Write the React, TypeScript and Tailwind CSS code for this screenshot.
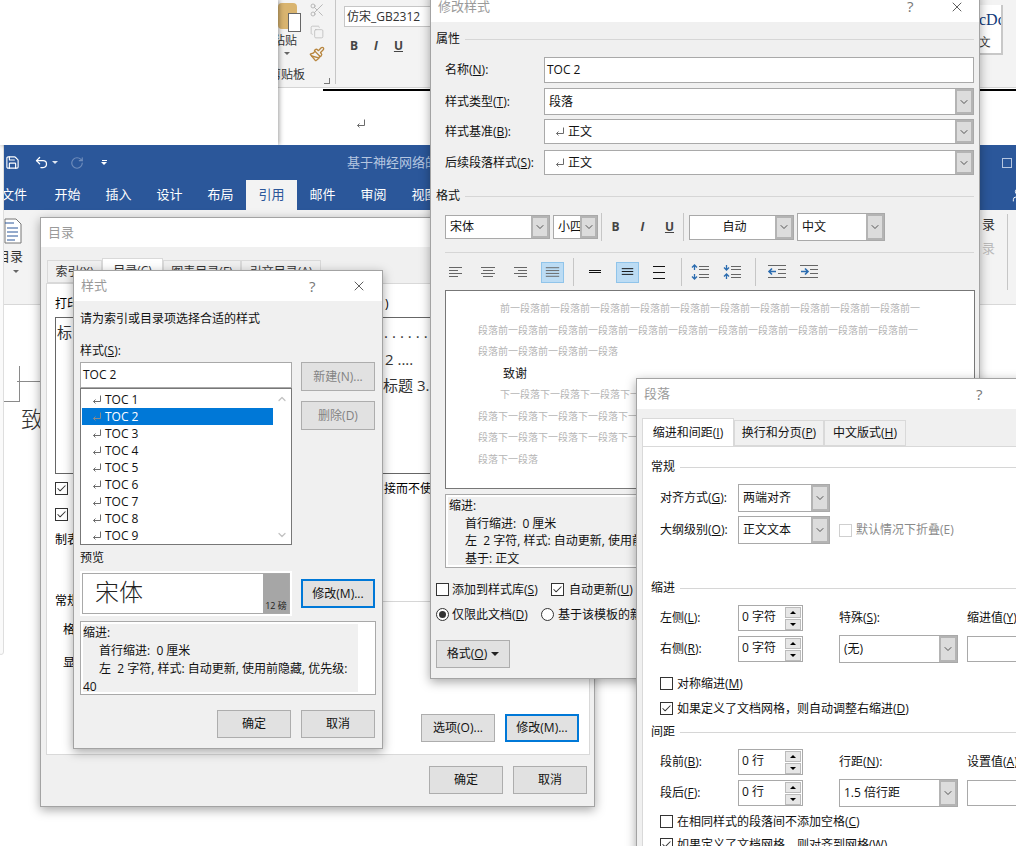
import React, { type FC, type ReactNode } from 'react';
import { ChevronDown, ChevronUp, Check, X, Scissors, Copy, Paintbrush, Save, Undo2, RotateCw, User } from 'lucide-react';

const TOC_ITEMS = ['TOC 1', 'TOC 2', 'TOC 3', 'TOC 4', 'TOC 5', 'TOC 6', 'TOC 7', 'TOC 8', 'TOC 9'];
const WORD_TABS = ['开始', '插入', '设计', '布局', '引用', '邮件', '审阅', '视图'];

const BEFORE = '前一段落';
const AFTER = '下一段落';

// Return mark shown in front of the style names
const ReturnMark = ({ className = 'text-[#6b6b6b]' }: { className?: string }) => (
  <svg width="9" height="10" viewBox="0 0 9 10" className={`shrink-0 ${className}`} fill="none" stroke="currentColor">
    <path d="M8.5 0.5V6.5H1.5M3.5 4.5L1.5 6.5L3.5 8.5" />
  </svg>
);

const Btn = ({ children, primary, disabled, className = '' }: { children: ReactNode; primary?: boolean; disabled?: boolean; className?: string }) => (
  <div
    className={`w-[74px] h-[28px] shrink-0 flex items-center justify-center bg-[#e1e1e1] ${
      primary ? 'border-2 border-[#0078d7]' : 'border border-[#adadad]'
    } ${disabled ? 'text-[#838383] bg-[#dedede]' : 'text-[#111]'} ${className}`}
  >
    {children}
  </div>
);

const Combo = ({ children, className = '', arrow = 'w-[18px]' }: { children: ReactNode; className?: string; arrow?: string }) => (
  <div className={`flex shrink-0 bg-white border border-[#a9a9a9] ${className}`}>
    <div className="flex-1 min-w-0 flex items-center overflow-hidden whitespace-nowrap pl-[4px]">{children}</div>
    <div className={`${arrow} shrink-0 flex items-center justify-center bg-[#dcdcdc] border-2 border-[#b4b4b4]`}>
      <ChevronDown size={12} strokeWidth={1.8} className="text-[#444]" />
    </div>
  </div>
);

const CheckBox = ({ checked, disabled }: { checked?: boolean; disabled?: boolean }) => (
  <div className={`w-[13px] h-[13px] shrink-0 flex items-center justify-center bg-white border ${disabled ? 'border-[#cfcfcf]' : 'border-[#333]'}`}>
    {checked && <Check size={11} strokeWidth={2.2} className="text-[#333]" />}
  </div>
);

const Radio = ({ on }: { on?: boolean }) => (
  <div className="w-[13px] h-[13px] shrink-0 rounded-full bg-white border border-[#333] flex items-center justify-center">
    {on && <div className="w-[7px] h-[7px] rounded-full bg-[#333]" />}
  </div>
);

const SectionTitle = ({ title }: { title: string }) => (
  <div className="flex items-center gap-[5px] h-[16px]">
    <span className="shrink-0">{title}</span>
    <div className="flex-1 h-px bg-[#d6d6d6]" />
  </div>
);

const Spin = ({ value }: { value: string }) => (
  <div className="w-[65px] h-[26px] shrink-0 flex items-center bg-white border border-[#a9a9a9]">
    <span className="flex-1 pl-[3px] -mt-[2px]">{value}</span>
    <div className="w-[16px] flex flex-col gap-px mr-[1px]">
      <div className="h-[11px] bg-[#e6e6e6] border border-[#bbb] flex items-center justify-center">
        <div className="w-0 h-0 border-x-[3px] border-x-transparent border-b-[3px] border-b-black" />
      </div>
      <div className="h-[11px] bg-[#e6e6e6] border border-[#bbb] flex items-center justify-center">
        <div className="w-0 h-0 border-x-[3px] border-x-transparent border-t-[3px] border-t-black" />
      </div>
    </div>
  </div>
);

const Lines = ({ kind }: { kind: 'left' | 'center' | 'right' | 'justify' | 'single' | 'half' | 'double' }) => {
  const rows: Record<string, string> = {
    left: 'M4 6.5h13M4 9.5h9M4 12.5h13M4 15.5h9',
    center: 'M4 6.5h14M6 9.5h10M4 12.5h14M6 15.5h10',
    right: 'M5 6.5h13M9 9.5h9M5 12.5h13M9 15.5h9',
    justify: 'M4 6.5h14M4 9.5h14M4 12.5h14M4 15.5h14',
    single: 'M5 9.5h12M5 11.5h12',
    half: 'M5 7.5h12M5 10.5h12M5 13.5h12',
    double: 'M5 5.5h12M5 11.5h12M5 17.5h12',
  };
  return (
    <svg width="22" height="22" viewBox="0 0 22 22" fill="none" stroke={kind === 'single' || kind === 'half' || kind === 'double' ? '#111' : '#666'} strokeWidth="1">
      <path d={rows[kind]} />
    </svg>
  );
};

const SpacingIcon = ({ open }: { open: boolean }) => (
  <svg width="22" height="22" viewBox="0 0 22 22" fill="none">
    <path d="M9 5.5h10M9 8.5h10M9 13.5h10M9 16.5h10" stroke="#666" />
    <path d={open ? 'M4.5 9V4M2 6.5l2.5-2.5 2.5 2.5M4.5 13v5M2 15.5l2.5 2.5 2.5-2.5' : 'M4.5 4v5M2 6.5l2.5 2.5 2.5-2.5M4.5 18v-5M2 15.5l2.5-2.5 2.5 2.5'} stroke="#2b6cb0" strokeWidth="1.3" />
  </svg>
);

const IndentIcon = ({ inward }: { inward: boolean }) => (
  <svg width="22" height="22" viewBox="0 0 22 22" fill="none">
    <path d="M2 4.5h18M12 8.5h8M12 12.5h8M2 16.5h18" stroke="#666" />
    <path d={inward ? 'M3 10.5h7M7 7.5l3 3-3 3' : 'M10 10.5H3M6 7.5l-3 3 3 3'} stroke="#2b6cb0" strokeWidth="1.6" />
  </svg>
);

const Sep = ({ h = 'h-[28px]' }: { h?: string }) => <div className={`w-px ${h} bg-[#c6c6c6] shrink-0`} />;

const Active = ({ children }: { children: ReactNode }) => (
  <div className="w-[23px] h-[21px] flex items-center justify-center bg-[#bcdcf4] border border-[#90c4ea]">{children}</div>
);

// Window with a white caption bar and the gray dialog body
const Dialog = ({
  title,
  className,
  closeAt,
  children,
  captionH,
}: {
  title: string;
  className: string;
  closeAt?: string;
  captionH: string;
  children: ReactNode;
}) => (
  <div className={`absolute flex flex-col bg-[#f0f0f0] border border-[#a3a3a3] shadow-[0_3px_10px_rgba(0,0,0,0.35)] ${className}`}>
    <div className={`${captionH} shrink-0 bg-white flex items-center pl-[7px] text-[13px] text-[#9a9a9a] whitespace-nowrap`}>
      <span>{title}</span>
      {closeAt && (
        <div className={`flex items-center ml-auto ${closeAt}`}>
          <span className="text-[15px] text-[#777] w-[42px]">?</span>
          <X size={16} strokeWidth={1.3} className="text-[#444]" />
        </div>
      )}
    </div>
    {children}
  </div>
);

const WordWindowBack: FC = () => (
  <div className="absolute left-[278px] top-0 w-[738px] h-[145px] bg-white">
    <div className="h-[88px] bg-[#f3f3f3] border-b border-[#d4d4d4] flex">
      <div className="w-[47px] relative shrink-0 overflow-hidden">
        <div className="w-[19px] h-[26px] bg-[#d9b46f] rounded-sm mt-[3px]" />
        <div className="absolute left-[10px] top-[13px] w-[13px] h-[19px] bg-white border border-[#666]" />
        <div className="text-[12px] leading-none mt-[6px] -ml-[5px] text-[#333] whitespace-nowrap">粘贴</div>
        <div className="w-0 h-0 mt-[5px] ml-[6px] border-x-[3px] border-x-transparent border-t-[3px] border-t-[#666]" />
        <div className="text-[12px] leading-none mt-[14px] -ml-[9px] text-[#333] whitespace-nowrap">剪贴板</div>
      </div>
      <div className="w-[32px] -ml-[24px] pt-[2px] flex flex-col gap-[7px] items-center text-[#b4b4b4] shrink-0">
        <Scissors size={16} strokeWidth={1.4} />
        <Copy size={14} strokeWidth={1.2} />
        <Paintbrush size={16} strokeWidth={2} className="text-[#b8863f]" />
        <div className="w-[6px] h-[6px] mt-[9px] ml-[20px] border-r border-b border-[#777]" />
      </div>
      <div className="ml-[2px]"><Sep h="h-[84px]" /></div>
      <div className="pl-[8px] pt-[6px]">
        <div className="w-[90px] h-[21px] bg-white border border-[#c6c6c6] text-[12px] text-[#333] flex items-center pl-[2px] whitespace-nowrap">
          仿宋_GB2312
        </div>
        <div className="flex gap-[16px] mt-[10px] ml-[6px] text-[#444] font-bold text-[12px]">
          <span>B</span>
          <span className="italic">I</span>
          <span className="underline">U</span>
        </div>
      </div>
      <div className="ml-auto w-[37px] shrink-0 pt-[5px]">
        <div className="w-[24px] h-[50px] bg-white border-r-2 border-b-2 border-[#c8c8c8] text-[16px] leading-[20px] pt-[5px] overflow-hidden font-['Liberation_Serif',serif] text-[#123a7a]">
          <div className="whitespace-nowrap">cDc</div>
          <div className="text-[#333] text-[12px] mt-[2px]">文</div>
        </div>
      </div>
    </div>
    <div className="h-[2px] bg-black ml-[45px] mt-px" />
    <div className="ml-[78px] mt-[28px]">
      <ReturnMark />
    </div>
  </div>
);

const WordWindowFront: FC = () => (
  <div className="absolute left-[4px] top-[145px] w-[1012px] h-[701px] bg-white">
    <div className="h-[35px] bg-[#2b579a] flex items-center text-white">
      <Save size={15} strokeWidth={1.8} className="ml-[1px]" />
      <Undo2 size={15} strokeWidth={2} className="ml-[14px]" />
      <div className="w-0 h-0 ml-[3px] border-x-[3px] border-x-transparent border-t-[3px] border-t-[#dfe6f1]" />
      <RotateCw size={14} strokeWidth={2} className="ml-[12px] text-[#6f8dbc]" />
      <div className="ml-[17px] flex flex-col items-center gap-px">
        <div className="w-[5px] h-px bg-white" />
        <div className="w-0 h-0 border-x-[3px] border-x-transparent border-t-[3px] border-t-white" />
      </div>
      <span className="ml-[240px] text-[13px] text-[#b5c6e0] whitespace-nowrap">基于神经网络的</span>
      <div className="ml-auto mr-[4px] w-[10px] h-[10px] border border-[#b5c6e0]" />
    </div>
    <div className="h-[30px] bg-[#2b579a] flex items-stretch text-[13px] text-white overflow-hidden">
      <div className="w-[40px] -ml-[15px] text-right flex items-center justify-end pr-[2px] shrink-0 overflow-hidden">文件</div>
      <div className="w-[13px] shrink-0" />
      {WORD_TABS.map((tab) => (
        <div
          key={tab}
          className={`w-[51px] shrink-0 flex items-center justify-center ${tab === '引用' ? 'bg-[#f3f3f3] text-[#2b579a]' : ''}`}
        >
          {tab}
        </div>
      ))}
      <User size={16} strokeWidth={1.4} className="ml-auto -mr-[10px] self-center" />
    </div>
    <div className="h-[95px] bg-[#f3f3f3] border-b border-[#d8d8d8] flex">
      <div className="w-[30px] pt-[8px] text-[13px] text-[#333] shrink-0 overflow-hidden">
        <svg width="18" height="26" viewBox="0 0 18 26" fill="none">
          <path d="M1 1h11l5 5v19H1z" fill="#fff" stroke="#777" />
          <path d="M1 5h9M3 10h11M3 14h11M3 18h11M3 22h8" stroke="#2b579a" />
        </svg>
        <div className="mt-[3px] -ml-[7px] whitespace-nowrap leading-[18px]">目录</div>
        <div className="w-0 h-0 mt-[5px] ml-[9px] border-x-[3px] border-x-transparent border-t-[3px] border-t-[#666]" />
      </div>
      <div className="ml-auto w-[28px] pl-[2px] pt-[1px] text-[13px] text-[#333] flex flex-col gap-[4px] mr-[8px] border-r border-[#c6c6c6] h-[76px] mt-[4px] shrink-0">
        <span>录</span>
        <span className="text-[#bbb]">录</span>
      </div>
    </div>
  </div>
);

// Ruler corner marks and the page text peeking out to the left of the dialog
const PageMarks: FC = () => (
  <>
    <div className="absolute left-[19px] top-[366px] w-px h-[36px] bg-[#8a8a8a]" />
    <div className="absolute left-[17px] top-[381px] w-[23px] h-px bg-[#8a8a8a]" />
    <div className="absolute left-[4px] top-[401px] w-[15px] h-px bg-[#8a8a8a]" />
    <div className="absolute left-[21px] top-[403px] text-[23px] leading-[30px] text-[#333] font-['Noto_Sans_CJK_SC',serif] font-light">致</div>
  </>
);

const TocDialog: FC = () => (
  <Dialog title="目录" className="left-[40px] top-[217px] w-[555px] h-[590px]" captionH="h-[29px]">
    <div className="mt-[11px] ml-[6px] h-[25px] flex items-end text-[12px] text-[#333]">
      <div className="w-[55px] h-[23px] bg-[#f0f0f0] border border-[#d9d9d9] flex items-center justify-center">索引(X)</div>
      <div className="w-[61px] h-[25px] bg-white border border-b-0 border-[#d9d9d9] flex items-center justify-center">目录(C)</div>
      <div className="w-[78px] h-[23px] bg-[#f0f0f0] border border-[#d9d9d9] flex items-center justify-center">图表目录(F)</div>
      <div className="w-[80px] h-[23px] bg-[#f0f0f0] border border-[#d9d9d9] flex items-center justify-center">引文目录(A)</div>
    </div>
    <div className="ml-[5px] w-[544px] h-[472px] bg-white border border-[#d9d9d9] text-[12px] pl-[8px] pr-[10px] overflow-hidden">
      <div className="mt-[13px] h-[14px] flex items-center leading-none">
        <span className="w-[330px] shrink-0">打印预览(V)</span>
        <span>)</span>
      </div>
      <div className="mt-[6px] h-[157px] w-[420px] border border-[#666] pt-[1px] text-[#333] text-[15px] leading-[27px] overflow-hidden whitespace-nowrap">
        <div className="flex">
          <span className="w-[328px] shrink-0 pl-[1px]">标</span>
          <span className="tracking-[4px]">.......</span>
        </div>
        <div className="pl-[329px]">2 ....</div>
        <div className="pl-[327px] -mt-px">标题 3.</div>
      </div>
      <div className="mt-[8px] h-[13px] flex items-center whitespace-nowrap">
        <CheckBox checked />
        <span className="ml-[316px]">接而不使用</span>
      </div>
      <div className="mt-[13px]">
        <CheckBox checked />
      </div>
      <div className="mt-[13px] h-[14px] leading-none">制表</div>
      <div className="mt-[45px]">
        <SectionTitle title="常规" />
      </div>
      <div className="mt-[15px] h-[14px] leading-none ml-[8px]">格</div>
      <div className="mt-[19px] h-[14px] leading-none ml-[8px]">显</div>
      <div className="mt-[43px] flex justify-end gap-[10px]">
        <Btn>选项(O)...</Btn>
        <Btn primary>修改(M)...</Btn>
      </div>
    </div>
    <div className="mt-[11px] mr-[7px] flex justify-end gap-[10px] text-[12px]">
      <Btn>确定</Btn>
      <Btn>取消</Btn>
    </div>
  </Dialog>
);

const StyleDialog: FC = () => (
  <Dialog
    title="样式"
    className="left-[73px] top-[270px] w-[310px] h-[479px]"
    captionH="h-[30px]"
    closeAt="mr-[15px]"
  >
    <div className="pl-[6px] text-[12px] text-[#111]">
      <div className="mt-[10px] h-[16px] leading-[16px]">请为索引或目录项选择合适的样式</div>
      <div className="mt-[16px] h-[16px] leading-[16px]">
        样式(<span className="underline">S</span>):
      </div>
      <div className="mt-[3px] flex gap-[9px]">
        <div className="w-[212px] flex flex-col">
          <div className="h-[26px] bg-white border border-[#a9a9a9] flex items-center pl-[2px]">TOC 2</div>
          <div className="h-[157px] bg-white border border-[#777] flex pl-[1px] pt-[1px]">
            <div className="w-[191px] pt-[1px]">
              {TOC_ITEMS.map((item) => (
                <div
                  key={item}
                  className={`h-[17px] flex items-center pl-[10px] gap-[4px] ${item === 'TOC 2' ? 'bg-[#0078d7] text-white' : ''}`}
                >
                  <ReturnMark className={item === 'TOC 2' ? 'text-[#8a8a8a]' : 'text-[#6b6b6b]'} />
                  {item}
                </div>
              ))}
            </div>
            <div className="w-[17px] flex flex-col items-center justify-between py-[3px] text-[#c2c2c2]">
              <ChevronUp size={12} strokeWidth={2.5} />
              <ChevronDown size={12} strokeWidth={2.5} />
            </div>
          </div>
        </div>
        <div className="flex flex-col gap-[10px]">
          <Btn disabled className="h-[29px]">新建(N)...</Btn>
          <Btn disabled className="h-[29px]">删除(D)</Btn>
        </div>
      </div>
      <div className="mt-[5px] h-[16px] leading-[16px]">预览</div>
      <div className="mt-[5px] flex items-center gap-[9px]">
        <div className="w-[212px] h-[45px] bg-white p-[2px]">
          <div className="h-full border border-[#a9a9a9] flex">
            <div className="flex-1 pl-[12px] text-[24px] leading-[36px] font-light text-[#222]">宋体</div>
            <div className="w-[26px] bg-[#a6a6a6] text-[9px] flex items-end justify-center whitespace-nowrap leading-[14px] text-[#222]">12 磅</div>
          </div>
        </div>
        <Btn primary className="h-[29px]">修改(M)...</Btn>
      </div>
      <div className="mt-[5px] w-[296px] h-[74px] bg-white border border-[#a9a9a9] p-[2px] pr-[17px] leading-[18px]">
        <div className="h-full bg-[#f0f0f0] whitespace-nowrap">
          <div className="h-[18px]">缩进:</div>
          <div className="pl-[16px]">首行缩进:&nbsp;&nbsp;0 厘米</div>
          <div className="pl-[16px]">左&nbsp;&nbsp;2 字符, 样式: 自动更新, 使用前隐藏, 优先级:</div>
          <div>40</div>
        </div>
      </div>
      <div className="mt-[15px] flex gap-[10px] ml-[137px]">
        <Btn>确定</Btn>
        <Btn>取消</Btn>
      </div>
    </div>
  </Dialog>
);

const ModifyDialog: FC = () => {
  const preview = (word: string, n: number) => word.repeat(n);
  return (
    <Dialog
      title="修改样式"
      className="left-[430px] top-[-10px] w-[550px] h-[689px]"
      captionH="h-[31px]"
      closeAt="mr-[14px]"
    >
      <div className="pl-[5px] pr-[5px] text-[12px] text-[#111]">
        <div className="mt-[9px]">
          <SectionTitle title="属性" />
        </div>
        <div className="ml-[9px]">
          <div className="mt-[10px] flex items-center">
            <span className="w-[99px] shrink-0">名称(<span className="underline">N</span>):</span>
            <div className="w-[430px] h-[26px] bg-white border border-[#a9a9a9] flex items-center pl-[2px]">TOC 2</div>
          </div>
          <div className="mt-[5px] flex items-center">
            <span className="w-[99px] shrink-0">样式类型(<span className="underline">T</span>):</span>
            <Combo className="w-[430px] h-[27px]">段落</Combo>
          </div>
          <div className="mt-[4px] flex items-center">
            <span className="w-[99px] shrink-0">样式基准(<span className="underline">B</span>):</span>
            <Combo className="w-[430px] h-[25px]">
              <span className="ml-[6px] mr-[4px]"><ReturnMark /></span>正文
            </Combo>
          </div>
          <div className="mt-[6px] flex items-center">
            <span className="w-[99px] shrink-0 whitespace-nowrap">后续段落样式(<span className="underline">S</span>):</span>
            <Combo className="w-[430px] h-[25px]">
              <span className="ml-[6px] mr-[4px]"><ReturnMark /></span>正文
            </Combo>
          </div>
        </div>
        <div className="mt-[13px]">
          <SectionTitle title="格式" />
        </div>
        <div className="ml-[9px] mt-[9px] h-[28px] flex items-center">
          <Combo className="w-[105px] h-[24px]">宋体</Combo>
          <Combo className="w-[45px] h-[24px] ml-[3px]" arrow="w-[17px]">小四</Combo>
          <div className="ml-[3px]"><Sep /></div>
          <span className="w-[27px] text-center font-bold text-[#444]">B</span>
          <span className="w-[27px] text-center italic font-bold text-[#444]">I</span>
          <span className="w-[27px] text-center underline font-bold text-[#444]">U</span>
          <Sep />
          <Combo className="w-[105px] h-[25px] ml-[5px]"><span className="w-full text-center">自动</span></Combo>
          <Combo className="w-[88px] h-[28px] ml-[3px]">中文</Combo>
        </div>
        <div className="ml-[9px] mt-[11px] h-px bg-[#d6d6d6]" />
        <div className="ml-[9px] mt-[5px] h-[28px] flex items-center">
          <Lines kind="left" />
          <div className="ml-[10px]"><Lines kind="center" /></div>
          <div className="ml-[10px]"><Lines kind="right" /></div>
          <div className="ml-[10px]"><Active><Lines kind="justify" /></Active></div>
          <div className="ml-[9px]"><Sep /></div>
          <div className="ml-[10px]"><Lines kind="single" /></div>
          <div className="ml-[10px]"><Active><Lines kind="half" /></Active></div>
          <div className="ml-[9px]"><Lines kind="double" /></div>
          <div className="ml-[11px]"><Sep /></div>
          <div className="ml-[8px]"><SpacingIcon open /></div>
          <div className="ml-[10px]"><SpacingIcon open={false} /></div>
          <div className="ml-[11px]"><Sep /></div>
          <div className="ml-[10px]"><IndentIcon inward={false} /></div>
          <div className="ml-[10px]"><IndentIcon inward /></div>
        </div>
        <div className="ml-[9px] mt-[4px] w-[530px] h-[199px] bg-white border border-[#777] pt-[7px] text-[10px] leading-[21.5px] text-[#b5b5b5] overflow-hidden whitespace-nowrap">
          <div className="pl-[54px]">{preview(BEFORE, 10)}前一</div>
          <div className="pl-[32px]">段落{preview(BEFORE, 10)}前一</div>
          <div className="pl-[32px]">段落{preview(BEFORE, 3)}</div>
          <div className="pl-[57px] text-[12px] text-[#111]">致谢</div>
          <div className="pl-[54px]">{preview(AFTER, 10)}下一</div>
          <div className="pl-[32px]">段落{preview(AFTER, 10)}下一</div>
          <div className="pl-[32px]">段落{preview(AFTER, 10)}下一</div>
          <div className="pl-[32px]">段落下一段落</div>
        </div>
        <div className="ml-[9px] mt-[5px] w-[529px] h-[74px] bg-white border border-[#a9a9a9] p-[2px] leading-[17.5px]">
          <div className="h-full bg-[#f0f0f0] pl-[1px] whitespace-nowrap">
            <div>缩进:</div>
            <div className="pl-[16px]">首行缩进:&nbsp;&nbsp;0 厘米</div>
            <div className="pl-[16px]">左&nbsp;&nbsp;2 字符, 样式: 自动更新, 使用前隐藏, 优先级: 40</div>
            <div className="pl-[16px]">基于: 正文</div>
          </div>
        </div>
        <div className="mt-[15px] h-[13px] flex items-center whitespace-nowrap">
          <CheckBox />
          <span className="ml-[3px] w-[99px]">添加到样式库(<span className="underline">S</span>)</span>
          <CheckBox checked />
          <span className="ml-[5px]">自动更新(<span className="underline">U</span>)</span>
        </div>
        <div className="mt-[12px] h-[13px] flex items-center whitespace-nowrap">
          <Radio on />
          <span className="ml-[3px] w-[89px]">仅限此文档(<span className="underline">D</span>)</span>
          <Radio />
          <span className="ml-[4px]">基于该模板的新文档</span>
        </div>
        <div className="mt-[19px]">
          <Btn className="gap-[4px]">
            <span>格式(<span className="underline">O</span>)</span>
            <div className="w-0 h-0 border-x-[4px] border-x-transparent border-t-[4px] border-t-[#222]" />
          </Btn>
        </div>
      </div>
    </Dialog>
  );
};

const Row = ({ label, accel, after = '):', children }: { label: string; accel: string; after?: string; children: ReactNode }) => (
  <div className="flex items-center ml-[9px]">
    <span className="w-[78px] shrink-0 whitespace-nowrap">
      {label}(<span className="underline">{accel}</span>{after}
    </span>
    {children}
  </div>
);

const ParagraphDialog: FC = () => (
  <Dialog
    title="段落"
    className="left-[636px] top-[378px] w-[400px] h-[480px] border-r-0"
    captionH="h-[30px]"
    closeAt="mr-[2px]"
  >
    <div className="mt-[9px] ml-[5px] h-[28px] flex items-end text-[12px] text-[#111]">
      <div className="w-[92px] h-[28px] bg-white border border-b-0 border-[#d9d9d9] flex items-center justify-center">
        缩进和间距(<span className="underline">I</span>)
      </div>
      <div className="w-[90px] h-[26px] border border-[#d9d9d9] flex items-center justify-center">
        换行和分页(<span className="underline">P</span>)
      </div>
      <div className="w-[82px] h-[26px] border border-[#d9d9d9] flex items-center justify-center">
        中文版式(<span className="underline">H</span>)
      </div>
    </div>
    <div className="flex-1 ml-[5px] bg-white border-l border-t border-[#d9d9d9] pl-[8px] text-[12px] text-[#111] whitespace-nowrap">
      <div className="pt-[12px]">
        <SectionTitle title="常规" />
      </div>
      <div className="mt-[9px]">
        <Row label="对齐方式" accel="G">
          <Combo className="w-[92px] h-[28px]" arrow="w-[18px]">两端对齐</Combo>
        </Row>
      </div>
      <div className="mt-[4px]">
        <Row label="大纲级别" accel="O">
          <Combo className="w-[92px] h-[28px]" arrow="w-[18px]">正文文本</Combo>
          <div className="ml-[9px]"><CheckBox disabled /></div>
          <span className="ml-[4px] text-[#8a8a8a]">默认情况下折叠(E)</span>
        </Row>
      </div>
      <div className="mt-[36px]">
        <SectionTitle title="缩进" />
      </div>
      <div className="mt-[9px]">
        <Row label="左侧" accel="L">
          <Spin value="0 字符" />
          <span className="ml-[36px] w-[128px]">特殊(<span className="underline">S</span>):</span>
          <span>缩进值(<span className="underline">Y</span>):</span>
        </Row>
      </div>
      <div className="mt-[5px]">
        <Row label="右侧" accel="R">
          <Spin value="0 字符" />
          <Combo className="w-[119px] h-[28px] -my-[1px] ml-[36px]">(无)</Combo>
          <div className="w-[60px] h-[26px] ml-[9px] bg-white border border-[#a9a9a9]" />
        </Row>
      </div>
      <div className="mt-[15px] ml-[9px] h-[13px] flex items-center">
        <CheckBox />
        <span className="ml-[4px]">对称缩进(<span className="underline">M</span>)</span>
      </div>
      <div className="mt-[12px] ml-[9px] h-[13px] flex items-center">
        <CheckBox checked />
        <span className="ml-[4px]">如果定义了文档网格，则自动调整右缩进(<span className="underline">D</span>)</span>
      </div>
      <div className="mt-[9px]">
        <SectionTitle title="间距" />
      </div>
      <div className="mt-[9px]">
        <Row label="段前" accel="B">
          <Spin value="0 行" />
          <span className="ml-[36px] w-[128px]">行距(<span className="underline">N</span>):</span>
          <span>设置值(<span className="underline">A</span>):</span>
        </Row>
      </div>
      <div className="mt-[5px]">
        <Row label="段后" accel="F">
          <Spin value="0 行" />
          <Combo className="w-[119px] h-[28px] -my-[1px] ml-[36px]">1.5 倍行距</Combo>
          <div className="w-[60px] h-[26px] ml-[9px] bg-white border border-[#a9a9a9]" />
        </Row>
      </div>
      <div className="mt-[9px] ml-[9px] h-[13px] flex items-center">
        <CheckBox />
        <span className="ml-[4px]">在相同样式的段落间不添加空格(<span className="underline">C</span>)</span>
      </div>
      <div className="mt-[10px] ml-[9px] h-[13px] flex items-center">
        <CheckBox checked />
        <span className="ml-[4px]">如果定义了文档网格，则对齐到网格(<span className="underline">W</span>)</span>
      </div>
    </div>
  </Dialog>
);

const App: FC = () => (
  <div className="relative w-[1016px] h-[846px] overflow-hidden bg-white text-[12px] font-['Open_Sans','Noto_Sans_CJK_SC',sans-serif]">
    <div className="absolute left-[-2px] top-[22px] w-[6px] h-[633px] bg-[#fafafa] border border-[#dedede] rounded-sm" />
    <WordWindowBack />
    <div className="absolute left-0 top-0 w-[278px] h-[145px] bg-white shadow-[1px_0_5px_rgba(0,0,0,0.4)]" />
    <WordWindowFront />
    <PageMarks />
    <TocDialog />
    <StyleDialog />
    <ModifyDialog />
    <ParagraphDialog />
  </div>
);

export default App;
